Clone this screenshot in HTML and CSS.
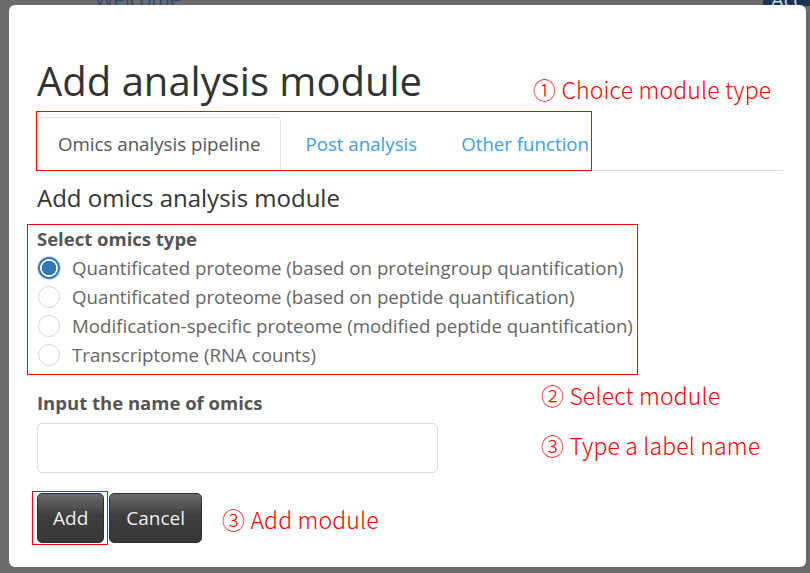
FILE: index.html
```html
<!DOCTYPE html>
<html>
<head>
<meta charset="utf-8">
<link rel="stylesheet" href="styles.css">
</head>
<body>
<div class="page">
  <div class="page-top">
    <span class="welcome">Welcome</span>
    <span class="nav-box">Acc</span>
  </div>
  <div class="modal">
    <div class="title-row">
      <h1 class="title">Add analysis module</h1>
      <span class="note note-1">① Choice module type</span>
    </div>
    <div class="tabs-wrap">
      <ul class="tabs">
        <li class="tab active">Omics analysis pipeline</li>
        <li class="tab">Post analysis</li>
        <li class="tab">Other function</li>
      </ul>
      <div class="mark mark-tabs"></div>
    </div>
    <h2 class="subtitle">Add omics analysis module</h2>
    <div class="radio-box">
      <div class="label">Select omics type</div>
      <label class="radio-row"><span class="radio checked"></span>Quantificated proteome (based on proteingroup quantification)</label>
      <label class="radio-row"><span class="radio"></span>Quantificated proteome (based on peptide quantification)</label>
      <label class="radio-row"><span class="radio"></span>Modification-specific proteome (modified peptide quantification)</label>
      <label class="radio-row"><span class="radio"></span>Transcriptome (RNA counts)</label>
    </div>
    <div class="input-row">
      <div class="input-col">
        <div class="label">Input the name of omics</div>
        <div class="text-input"></div>
      </div>
      <div class="notes-col">
        <span class="note">② Select module</span>
        <span class="note">③ Type a label name</span>
      </div>
    </div>
    <div class="btn-row">
      <span class="add-mark"><button class="btn">Add</button></span>
      <button class="btn">Cancel</button>
      <span class="note note-add">③ Add module</span>
    </div>
  </div>
</div>
</body>
</html>
```

FILE: styles.css
```css
* { box-sizing: border-box; }
html, body { margin: 0; padding: 0; }
body {
  width: 810px;
  height: 573px;
  overflow: hidden;
  background: #6b6b6b;
  font-family: "Open Sans", "Noto Sans", sans-serif;
}
.page { position: relative; width: 810px; height: 573px; }
.page-top {
  position: absolute;
  left: 0; top: 0; width: 810px; height: 6px;
  overflow: hidden;
}
.welcome {
  position: absolute;
  left: 95px; top: -14px;
  font-size: 20px;
  color: #2b4a78;
}
.nav-box {
  position: absolute;
  left: 763px; top: -14px; width: 47px; height: 20px;
  background: #1d3455;
  color: #c9d3e0;
  font-size: 20px;
  padding-left: 8px;
}
.modal {
  position: absolute;
  left: 9px; top: 5px;
  width: 797px; height: 562px;
  background: #fff;
  border-radius: 6px;
  padding: 0 0 0 28px;
}
.title-row {
  display: flex;
  align-items: flex-end;
  height: 102px;
}
.title {
  margin: 0;
  font-weight: 400;
  font-size: 40px;
  line-height: 44px;
  color: #333;
  padding-bottom: 4px;
}
.note {
  font-family: "Noto Sans CJK SC", "Noto Sans", sans-serif;
  font-weight: 300;
  color: #ff0000;
  font-size: 23px;
  line-height: 28px;
  letter-spacing: 0.15px;
}
.note-1 { margin-left: 111px; padding-bottom: 4px; }
.tabs-wrap { position: relative; width: 746px; }
.tabs {
  list-style: none;
  margin: 0; padding: 0;
  display: flex;
  border-bottom: 1px solid #dedede;
  height: 54px;
  margin-top: 10px;
}
.tab {
  padding: 0 20px;
  margin-right: 4px;
  font-size: 18.7px;
  line-height: 54px;
  color: #3d9df0;
}
.tab.active {
  color: #555;
  border: 1px solid #e2e2e2;
  border-bottom-color: #fff;
  border-radius: 4px 4px 0 0;
  height: 54px;
  line-height: 52px;
}
.mark-tabs {
  position: absolute;
  left: -1px; top: -6px;
  width: 556px; height: 60px;
  border: 1px solid #ff0000;
}
.subtitle {
  margin: 0;
  font-weight: 400;
  font-size: 24px;
  line-height: 30px;
  color: #333;
  padding-top: 12px;
}
.radio-box {
  margin-top: 11px;
  margin-left: -10px;
  width: 611px;
  border: 1px solid #ff0000;
  padding: 0 0 5px 9px;
}
.label {
  font-weight: 700;
  font-size: 18.5px;
  line-height: 28px;
  color: #555;
}
.radio-row {
  display: flex;
  align-items: center;
  height: 29px;
  font-size: 18.7px;
  color: #666;
}
.radio {
  width: 22px; height: 22px;
  border-radius: 50%;
  border: 1px solid #d6d6d6;
  margin: 0 12px 0 1px;
  flex: none;
  background: #fff;
}
.radio.checked {
  border: 2px solid #337ab7;
  background: radial-gradient(circle, #337ab7 0 7px, #fff 7.5px 100%);
  box-shadow: 0 0 0 1px #cfe0f0;
}
.input-row {
  display: flex;
  margin-top: 14px;
}
.input-col { width: 401px; }
.input-col .label { line-height: 28px; }
.text-input {
  margin-top: 6px;
  width: 401px; height: 50px;
  border: 1px solid #dcdcdc;
  border-radius: 5px;
}
.notes-col {
  display: flex;
  flex-direction: column;
  gap: 22px;
  margin-left: 103px;
  margin-top: -8px;
}
.btn-row {
  display: flex;
  align-items: center;
  margin-top: 18px;
  margin-left: -5px;
}
.add-mark {
  border: 1px solid #ff0000;
  padding: 1px 3px 1px 4px;
  display: inline-flex;
}
.btn {
  height: 50px;
  padding: 0 15px;
  border: 1px solid #2e2e2e;
  border-radius: 5px;
  background: linear-gradient(#6b6b6b, #3e3e3e 45%, #383838);
  color: #f0f0f0;
  font-family: "Open Sans", sans-serif;
  font-size: 19px;
}
.btn-row > .btn { margin-left: 1px; padding: 0 16px; }
.note-add { margin-left: 20px; margin-top: 2px; }
```
